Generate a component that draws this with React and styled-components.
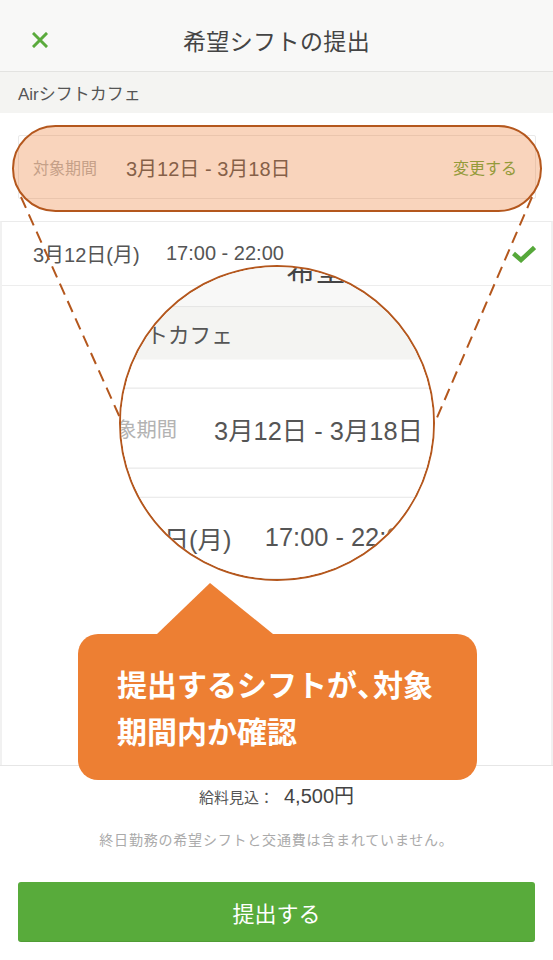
import React from 'react';
import styled, { createGlobalStyle } from 'styled-components';

const GlobalStyle = createGlobalStyle`
  html, body {
    margin: 0;
    padding: 0;
    background: #fff;
  }
  body {
    font-family: "Liberation Sans", "Noto Sans CJK JP", sans-serif;
  }
  * {
    box-sizing: border-box;
  }
`;

const ORANGE_LINE = '#b4571d';

const Stage = styled.div`
  position: relative;
  width: 553px;
  height: 960px;
  overflow: hidden;
  background: #fff;
`;

const Page = styled.div`
  display: flex;
  flex-direction: column;
  width: 553px;
  height: 960px;
  background: #fff;
`;

const Header = styled.header`
  display: grid;
  grid-template-columns: 80px 1fr 80px;
  align-items: center;
  height: 72px;
  padding-top: 8px;
  background: #f8f8f7;
  border-bottom: 1px solid #e3e3e1;
`;

const CloseButton = styled.button`
  display: flex;
  align-items: center;
  height: 100%;
  margin: 0;
  padding: 0 0 0 32px;
  border: 0;
  background: none;
`;

const Title = styled.h1`
  margin: 0;
  text-align: center;
  font-size: 23px;
  font-weight: normal;
  color: #444;
  letter-spacing: 0.4px;
`;

const StoreBar = styled.div`
  display: flex;
  align-items: center;
  height: 41px;
  padding: 0 18px;
  background: #f4f4f2;
  font-size: 17px;
  color: #555;
`;

const PeriodSection = styled.section`
  padding: 22px 17px 22px 18px;
`;

const PeriodCard = styled.div`
  display: flex;
  align-items: center;
  height: 64px;
  padding: 0 18px 0 14px;
  border: 1px solid #e9e9e9;
  border-radius: 2px;
`;

const PeriodLabel = styled.span`
  width: 93px;
  flex-shrink: 0;
  font-size: 16px;
  color: #b3b3b3;
`;

const PeriodValue = styled.span`
  flex: 1;
  font-size: 20px;
  color: #555;
`;

const ChangeLink = styled.span`
  font-size: 16px;
  color: #6aab3f;
`;

const ShiftList = styled.div`
  flex: 1;
  border-top: 1px solid #ebebeb;
  border-left: 2px solid #f1f1f1;
  border-right: 2px solid #f1f1f1;
`;

const ShiftRow = styled.div`
  display: flex;
  align-items: center;
  height: 64px;
  padding: 0 15px 0 31px;
  border-bottom: 1px solid #ededed;
  font-size: 20px;
  color: #555;
`;

const ShiftDate = styled.span`
  width: 133px;
`;

const ShiftTime = styled.span`
  flex: 1;
`;

const Footer = styled.footer`
  display: flex;
  flex-direction: column;
  align-items: center;
  padding: 19px 18px 18px;
  border-top: 1px solid #e6e6e6;
`;

const Salary = styled.div`
  display: flex;
  align-items: baseline;
  height: 22px;
  line-height: 22px;
  color: #555;
`;

const SalaryLabel = styled.span`
  font-size: 15px;
  margin-right: 10px;
`;

const SalaryAmount = styled.span`
  font-size: 20px;
  color: #444;
`;

const Note = styled.p`
  margin: 23px 0 0;
  font-size: 14px;
  line-height: 20px;
  letter-spacing: 0.8px;
  color: #aaa;
`;

const SubmitButton = styled.button`
  width: 100%;
  height: 60px;
  margin-top: 32px;
  border: 0;
  border-radius: 3px;
  background: #58ab3b;
  box-shadow: inset 0 -1px 0 rgba(0, 0, 0, 0.08);
  color: #fff;
  font-family: inherit;
  font-size: 22px;
`;

/* annotation layer */

const Connectors = styled.svg`
  position: absolute;
  inset: 0;
  pointer-events: none;
`;

const Highlight = styled.div`
  position: absolute;
  left: 12px;
  top: 125px;
  width: 530px;
  height: 87px;
  border-radius: 44px;
  border: 2px solid ${ORANGE_LINE};
  background: rgba(236, 120, 48, 0.32);
`;

const Magnifier = styled.div`
  position: absolute;
  left: 119px;
  top: 265px;
  width: 316px;
  height: 316px;
  border-radius: 50%;
  border: 2px solid ${ORANGE_LINE};
  overflow: hidden;
  background: #fff;
`;

const Magnified = styled.div`
  position: absolute;
  left: -67px;
  top: -51px;
  transform: scale(1.27);
  transform-origin: 0 0;
`;

const Callout = styled.div`
  position: absolute;
  left: 78px;
  top: 634px;
  width: 399px;
  height: 146px;
  padding: 26px 0 0 39px;
  border-radius: 20px;
  background: #ed7f33;
  color: #fff;
  font-family: "Noto Sans CJK JP", sans-serif;
  font-weight: bold;
  font-size: 30px;
  line-height: 47px;

  &::before {
    content: '';
    position: absolute;
    left: 79px;
    top: -51px;
    width: 0;
    height: 0;
    border-left: 53px solid transparent;
    border-right: 63px solid transparent;
    border-bottom: 51px solid #ed7f33;
  }
`;

const HalfComma = styled.span`
  letter-spacing: -14px;
`;

const shifts = [{ date: '3月12日(月)', time: '17:00 - 22:00', ok: true }];

const CloseIcon = () => (
  <svg width="16" height="16" viewBox="0 0 16 16">
    <path d="M2 2 L14 14 M14 2 L2 14" stroke="#5aaa3c" strokeWidth="3" strokeLinecap="square" />
  </svg>
);

const CheckIcon = () => (
  <svg width="24" height="18" viewBox="0 0 24 18">
    <path d="M1.5 8.5 L9 15 L22.5 2.5" fill="none" stroke="#56a83a" strokeWidth="4.5" />
  </svg>
);

const ShiftScreen = () => (
  <Page>
    <Header>
      <CloseButton aria-label="閉じる">
        <CloseIcon />
      </CloseButton>
      <Title>希望シフトの提出</Title>
      <span />
    </Header>
    <StoreBar>Airシフトカフェ</StoreBar>
    <PeriodSection>
      <PeriodCard>
        <PeriodLabel>対象期間</PeriodLabel>
        <PeriodValue>3月12日 - 3月18日</PeriodValue>
        <ChangeLink>変更する</ChangeLink>
      </PeriodCard>
    </PeriodSection>
    <ShiftList>
      {shifts.map((s) => (
        <ShiftRow key={s.date}>
          <ShiftDate>{s.date}</ShiftDate>
          <ShiftTime>{s.time}</ShiftTime>
          {s.ok && <CheckIcon />}
        </ShiftRow>
      ))}
    </ShiftList>
    <Footer>
      <Salary>
        <SalaryLabel>給料見込：</SalaryLabel>
        <SalaryAmount>4,500円</SalaryAmount>
      </Salary>
      <Note>終日勤務の希望シフトと交通費は含まれていません。</Note>
      <SubmitButton>提出する</SubmitButton>
    </Footer>
  </Page>
);

const App = () => (
  <>
    <GlobalStyle />
    <Stage>
      <ShiftScreen />

      <Connectors width="553" height="960" viewBox="0 0 553 960">
        <g stroke={ORANGE_LINE} strokeWidth="2" strokeDasharray="12 7" fill="none">
          <line x1="21" y1="197" x2="121" y2="420" />
          <line x1="532" y1="197" x2="436" y2="420" />
        </g>
      </Connectors>
      <Highlight />
      <Magnifier aria-hidden="true">
        <Magnified>
          <ShiftScreen />
        </Magnified>
      </Magnifier>
      <Callout>
        提出するシフトが<HalfComma>、</HalfComma>対象
        <br />
        期間内か確認
      </Callout>
    </Stage>
  </>
);

export default App;
